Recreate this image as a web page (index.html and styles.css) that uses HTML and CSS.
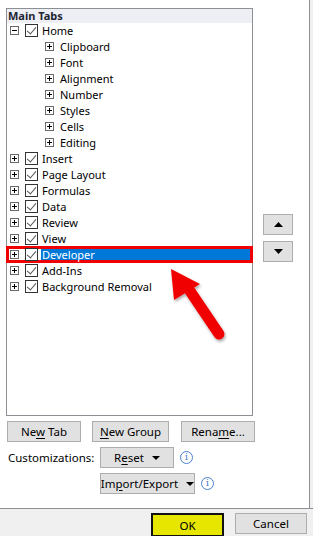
FILE: index.html
```html
<!DOCTYPE html>
<html>
<head>
<meta charset="utf-8">
<link rel="stylesheet" href="styles.css">
</head>
<body>
<div class="dialog">
  <div class="content">
    <div class="main">
      <div class="top">
        <div class="tree">
          <div class="tree-head">Main Tabs</div>
          <div class="row lvl0"><span class="exp minus"></span><span class="chk"></span><span class="lbl">Home</span></div>
          <div class="row lvl1"><span class="exp"></span><span class="lbl">Clipboard</span></div>
          <div class="row lvl1"><span class="exp"></span><span class="lbl">Font</span></div>
          <div class="row lvl1"><span class="exp"></span><span class="lbl">Alignment</span></div>
          <div class="row lvl1"><span class="exp"></span><span class="lbl">Number</span></div>
          <div class="row lvl1"><span class="exp"></span><span class="lbl">Styles</span></div>
          <div class="row lvl1"><span class="exp"></span><span class="lbl">Cells</span></div>
          <div class="row lvl1"><span class="exp"></span><span class="lbl">Editing</span></div>
          <div class="row lvl0"><span class="exp"></span><span class="chk"></span><span class="lbl">Insert</span></div>
          <div class="row lvl0"><span class="exp"></span><span class="chk"></span><span class="lbl">Page Layout</span></div>
          <div class="row lvl0"><span class="exp"></span><span class="chk"></span><span class="lbl">Formulas</span></div>
          <div class="row lvl0"><span class="exp"></span><span class="chk"></span><span class="lbl">Data</span></div>
          <div class="row lvl0"><span class="exp"></span><span class="chk"></span><span class="lbl">Review</span></div>
          <div class="row lvl0"><span class="exp"></span><span class="chk"></span><span class="lbl">View</span></div>
          <div class="row lvl0 selected"><span class="exp"></span><span class="chk"></span><span class="lbl">Developer</span></div>
          <div class="row lvl0"><span class="exp"></span><span class="chk"></span><span class="lbl">Add-Ins</span></div>
          <div class="row lvl0"><span class="exp"></span><span class="chk"></span><span class="lbl">Background Removal</span></div>
        </div>
        <div class="movers">
          <div class="mv"><svg width="9" height="5" viewBox="0 0 9 5"><polygon points="0,5 9,5 4.5,0" fill="#000"/></svg></div>
          <div class="mv"><svg width="9" height="5" viewBox="0 0 9 5"><polygon points="0,0 9,0 4.5,5" fill="#000"/></svg></div>
        </div>
      </div>
      <div class="btnrow">
        <div class="btn w73"><span>Ne<u>w</u> Tab</span></div>
        <div class="btn w76"><span><u>N</u>ew Group</span></div>
        <div class="btn w73"><span>Rena<u>m</u>e...</span></div>
      </div>
      <div class="custrow">
        <div class="custlabel">Customizations:</div>
        <div class="custcol">
          <div class="line">
            <div class="btn dd w73"><span>R<u>e</u>set</span><span class="tri"></span></div>
            <span class="info">i</span>
          </div>
          <div class="line">
            <div class="btn dd w95"><span>Im<u>p</u>ort/Export</span><span class="tri"></span></div>
            <span class="info">i</span>
          </div>
        </div>
      </div>
    </div>
    <div class="side"></div>
  </div>
  <div class="footer">
    <div class="btn ok"><span>OK</span></div>
    <div class="btn cancel"><span>Cancel</span></div>
  </div>
  <svg class="arrow" width="80" height="90" viewBox="0 0 80 90">
    <defs>
      <filter id="sh" x="-30%" y="-30%" width="160%" height="160%">
        <feDropShadow dx="1" dy="2" stdDeviation="1.5" flood-color="#000" flood-opacity="0.35"/>
      </filter>
    </defs>
    <g filter="url(#sh)">
      <line x1="61" y1="76" x2="32" y2="33" stroke="#f00000" stroke-width="11" stroke-linecap="round"/>
      <polygon points="13,11 42,26 16,42" fill="#f00000"/>
    </g>
  </svg>
</div>
</body>
</html>
```
FILE: styles.css
```css
* { box-sizing: border-box; }
html, body { margin: 0; padding: 0; }
body {
  width: 313px;
  height: 536px;
  overflow: hidden;
  font-family: "Noto Sans", "Open Sans", "DejaVu Sans", sans-serif;
  font-size: 11px;
  color: #000;
  background: #fff;
}
.dialog {
  position: relative;
  width: 313px;
  height: 536px;
  display: flex;
  flex-direction: column;
}
.content {
  height: 509px;
  flex: 0 0 509px;
  display: flex;
  border-bottom: 1px solid #8c8f94;
}
.main {
  width: 310px;
  border-right: 1px solid #8c8f94;
  padding: 8px 0 0 6px;
  background: #fff;
}
.side { flex: 1; background: #f0f0f0; }
.top { display: flex; }
.tree {
  width: 247px;
  height: 408px;
  border: 1px solid #8c8f94;
  background: #fff;
}
.tree-head {
  height: 14px;
  line-height: 14px;
  background: #edeff4;
  font-weight: bold;
  color: #1e2433;
  padding-left: 1px;
}
.row {
  position: relative;
  height: 16px;
  display: flex;
  align-items: center;
  white-space: nowrap;
}
.tree-head + .row { height: 15px; }
.lvl0 { padding-left: 3px; }
.lvl1 { padding-left: 38px; }
.exp {
  position: relative;
  width: 9px;
  height: 9px;
  border: 1px solid #6b6b6b;
  flex: none;
}
.exp::before {
  content: "";
  position: absolute;
  left: 1px; top: 3px;
  width: 5px; height: 1px;
  background: #000;
}
.exp::after {
  content: "";
  position: absolute;
  left: 3px; top: 1px;
  width: 1px; height: 5px;
  background: #000;
}
.exp.minus::after { display: none; }
.chk {
  position: relative;
  width: 13px;
  height: 13px;
  border: 1px solid #333;
  margin-left: 6px;
  background: #fff;
  flex: none;
}
.chk::after {
  content: "";
  position: absolute;
  left: 3px; top: 0px;
  width: 4px; height: 8px;
  border-right: 1px solid #555;
  border-bottom: 1px solid #555;
  transform: rotate(40deg);
}
.lbl { margin-left: 3px; padding: 0 2px 0 1px; line-height: 15px; }
.lvl1 .lbl { margin-left: 5px; }
.selected::before {
  content: "";
  position: absolute;
  left: 34px; right: 0; top: 1px; bottom: 0;
  background: #0078d7;
}
.selected::after {
  content: "";
  position: absolute;
  left: -1px; right: -1px; top: 0px; bottom: -1px;
  border: 3px solid #f00000;
}
.selected .exp, .selected .chk { z-index: 1; }
.selected .lbl { position: relative; z-index: 1; color: #fff; }
.movers {
  margin-left: 10px;
  padding-top: 206px;
  display: flex;
  flex-direction: column;
  gap: 6px;
}
.mv {
  width: 30px;
  height: 21px;
  background: #e1e1e1;
  border: 1px solid #adadad;
  display: flex;
  align-items: center;
  justify-content: center;
}
.btn {
  height: 21px;
  background: #e1e1e1;
  border: 1px solid #adadad;
  display: flex;
  align-items: center;
  justify-content: center;
  white-space: nowrap;
  color: #000;
  font-size: 11.5px;
}
.btn u { text-decoration-thickness: 1px; text-underline-offset: 2px; }
.w73 { width: 74px; }
.w76 { width: 77px; }
.w95 { width: 95px; }
.btnrow {
  display: flex;
  gap: 11px;
  margin-top: 5px;
  padding-left: 1px;
}
.btnrow .btn:last-child { margin-left: 1px; }
.custrow {
  display: flex;
  margin-top: 5px;
  padding-left: 2px;
}
.custlabel { width: 92px; line-height: 22px; font-size: 11.5px; }
.custcol { display: flex; flex-direction: column; gap: 5px; }
.line { display: flex; align-items: center; }
.dd { gap: 8px; }
.tri {
  width: 0; height: 0;
  border-left: 4px solid transparent;
  border-right: 4px solid transparent;
  border-top: 4px solid #000;
}
.info {
  width: 13px;
  height: 13px;
  border: 1px solid #4a7fd0;
  border-radius: 50%;
  color: #3d6fc4;
  font-size: 9px;
  line-height: 11px;
  text-align: center;
  margin-left: 6px;
  font-family: "DejaVu Serif", serif;
}
.footer {
  flex: 1;
  background: #f0f0f0;
  display: flex;
  align-items: flex-start;
  padding: 4px 0 0 151px;
  gap: 11px;
}
.ok {
  width: 73px;
  height: 24px;
  background: #e6e600;
  border: 2px solid #111;
}
.cancel {
  width: 72px;
  height: 21px;
}
.arrow {
  position: absolute;
  left: 158px;
  top: 258px;
}
```
